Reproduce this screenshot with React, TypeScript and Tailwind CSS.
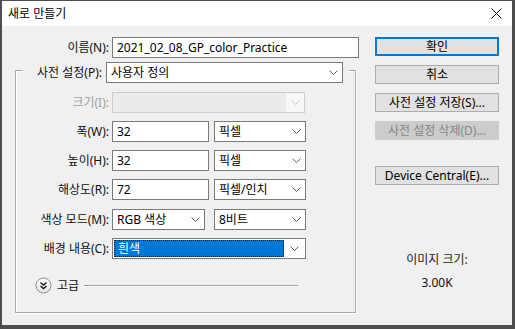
import React from "react"

const FONT = "font-['Noto_Sans','Noto_Sans_CJK_KR','Liberation_Sans',sans-serif]"

function Chevron({ color = "#5f5f5f" }: { color?: string }) {
  return (
    <svg width="9" height="5" viewBox="0 0 9 5" className="shrink-0">
      <path d="M0.5 0.5 L4.5 4.5 L8.5 0.5" fill="none" stroke={color} strokeWidth="1" />
    </svg>
  )
}

function CloseIcon() {
  return (
    <svg width="11" height="11" viewBox="0 0 11 11">
      <path d="M0.5 0.5 L10.5 10.5 M10.5 0.5 L0.5 10.5" stroke="#111" strokeWidth="1" />
    </svg>
  )
}

function ExpandIcon() {
  return (
    <svg width="17" height="17" viewBox="0 0 17 17">
      <defs>
        <linearGradient id="exg" x1="0" y1="0" x2="0" y2="1">
          <stop offset="0" stopColor="#ffffff" />
          <stop offset="1" stopColor="#e4e4e4" />
        </linearGradient>
      </defs>
      <circle cx="8.5" cy="8.5" r="7.5" fill="url(#exg)" stroke="#8a8a8a" strokeWidth="1" />
      <path d="M5.5 5.5 L8.5 8 L11.5 5.5 M5.5 9 L8.5 11.5 L11.5 9" fill="none" stroke="#111" strokeWidth="1.4" />
    </svg>
  )
}

function Label({ children, disabled }: { children: React.ReactNode; disabled?: boolean }) {
  return (
    <span className={`w-[96px] shrink-0 pr-[3px] text-right text-[12px] leading-none ${disabled ? "text-[#a0a0a0]" : "text-[#111]"}`}>
      {children}
    </span>
  )
}

function TextBox({ value, width }: { value: string; width: string }) {
  return (
    <div className={`${width} flex h-[21px] items-center border border-[#7a7a7a] bg-white pl-[4px] text-[12px] leading-none text-black`}>
      {value}
    </div>
  )
}

function Select({ value, width, className = "" }: { value: string; width: string; className?: string }) {
  return (
    <div className={`${width} ${className} flex h-[21px] items-center justify-between border border-[#7a7a7a] bg-white pl-[4px] pr-[4px] text-[12px] leading-none text-black`}>
      <span>{value}</span>
      <Chevron />
    </div>
  )
}

function Button({ children, primary, disabled }: { children: React.ReactNode; primary?: boolean; disabled?: boolean }) {
  if (disabled) {
    return (
      <div className="flex h-[19px] items-center justify-center border border-[#cccccc] bg-[#cccccc] text-[12px] leading-none text-[#858585]">
        {children}
      </div>
    )
  }
  return (
    <div
      className={`flex h-[19px] items-center justify-center bg-[#e1e1e1] text-[12px] leading-none text-black ${
        primary ? "border-2 border-[#0078d7]" : "border border-[#adadad]"
      }`}
    >
      {children}
    </div>
  )
}

export default function App() {
  return (
    <div className={`${FONT} h-[329px] w-[515px] bg-[#4e4e4e] pb-[4px] pl-[2px] pr-[3px] pt-px`}>
      <div className="flex h-full flex-col">

        {/* Title bar */}
        <div className="flex h-[25px] shrink-0 items-center justify-between bg-white pl-[6px] pr-[10px]">
          <span className="text-[12px] leading-none text-black">새로 만들기</span>
          <CloseIcon />
        </div>

        {/* Body */}
        <div className="flex min-h-0 flex-1 bg-[#f0f0f0] pt-[11px]">

          {/* Left: form */}
          <div className="w-[357px] shrink-0">
            <div className="flex h-[21px] items-center">
              <span className="w-[110px] shrink-0 pr-[3px] text-right text-[12px] leading-none text-[#111]">이름(N):</span>
              <TextBox value="2021_02_08_GP_color_Practice" width="w-[247px]" />
            </div>

            <fieldset className="ml-[13px] h-[255px] w-[341px] border border-[#a9a9a9] shadow-[inset_1px_1px_0_#ffffff,1px_1px_0_#ffffff]">
              <legend className="ml-[7px] flex items-center bg-[#f0f0f0] pr-[6px] pt-[4px]">
                <span className="w-[83px] pr-[4px] text-right text-[12px] leading-none text-[#111]">사전 설정(P):</span>
                <Select value="사용자 정의" width="w-[237px]" />
              </legend>

              <div className="mt-[9px] flex h-[21px] items-center">
                <Label disabled>크기(I):</Label>
                <div className="flex h-[21px] w-[193px] items-center border border-[#cccccc] bg-[#f0f0f0]">
                  <div className="h-full flex-1 bg-[#ebebeb]" />
                  <div className="flex h-full w-[18px] items-center justify-center bg-[#f7f7f7]">
                    <Chevron color="#c4c4c4" />
                  </div>
                </div>
              </div>

              <div className="mt-[8px] flex h-[21px] items-center">
                <Label>폭(W):</Label>
                <TextBox value="32" width="w-[97px]" />
                <Select value="픽셀" width="w-[92px]" className="ml-[5px]" />
              </div>

              <div className="mt-[8px] flex h-[21px] items-center">
                <Label>높이(H):</Label>
                <TextBox value="32" width="w-[97px]" />
                <Select value="픽셀" width="w-[92px]" className="ml-[5px]" />
              </div>

              <div className="mt-[8px] flex h-[21px] items-center">
                <Label>해상도(R):</Label>
                <TextBox value="72" width="w-[97px]" />
                <Select value="픽셀/인치" width="w-[92px]" className="ml-[5px]" />
              </div>

              <div className="mt-[9px] flex h-[21px] items-center">
                <Label>색상 모드(M):</Label>
                <Select value="RGB 색상" width="w-[93px]" />
                <Select value="8비트" width="w-[92px]" className="ml-[9px]" />
              </div>

              <div className="mt-[8px] flex h-[21px] items-center">
                <Label>배경 내용(C):</Label>
                <div className="flex h-[21px] w-[194px] items-center border border-[#7a7a7a] bg-white p-[1px]">
                  <div className="flex h-full flex-1 items-center border border-dotted border-[#222] bg-[#0078d7] pl-[3px] text-[12px] leading-none text-white">
                    흰색
                  </div>
                  <div className="flex h-full w-[20px] items-center justify-center">
                    <Chevron />
                  </div>
                </div>
              </div>

              <div className="mt-[18px] flex h-[17px] items-center">
                <div className="ml-[19px]">
                  <ExpandIcon />
                </div>
                <span className="ml-[5px] text-[12px] leading-none text-[#111]">고급</span>
                <div className="ml-[5px] h-px w-[214px] bg-[#a0a0a0] shadow-[0_1px_0_#ffffff]" />
              </div>
            </fieldset>
          </div>

          {/* Right: buttons */}
          <div className="ml-[16px] flex w-[124px] shrink-0 flex-col">
            <Button primary>확인</Button>
            <div className="mt-[9px]"><Button>취소</Button></div>
            <div className="mt-[9px]"><Button>사전 설정 저장(S)...</Button></div>
            <div className="mt-[9px]"><Button disabled>사전 설정 삭제(D)...</Button></div>
            <div className="mt-[26px]"><Button>Device Central(E)...</Button></div>

            <div className="mt-[67px] text-center text-[12px] leading-[16px] text-[#222]">이미지 크기:</div>
            <div className="mt-[7px] text-center text-[12px] leading-[16px] text-[#111]">3.00K</div>
          </div>
        </div>
      </div>
    </div>
  )
}
